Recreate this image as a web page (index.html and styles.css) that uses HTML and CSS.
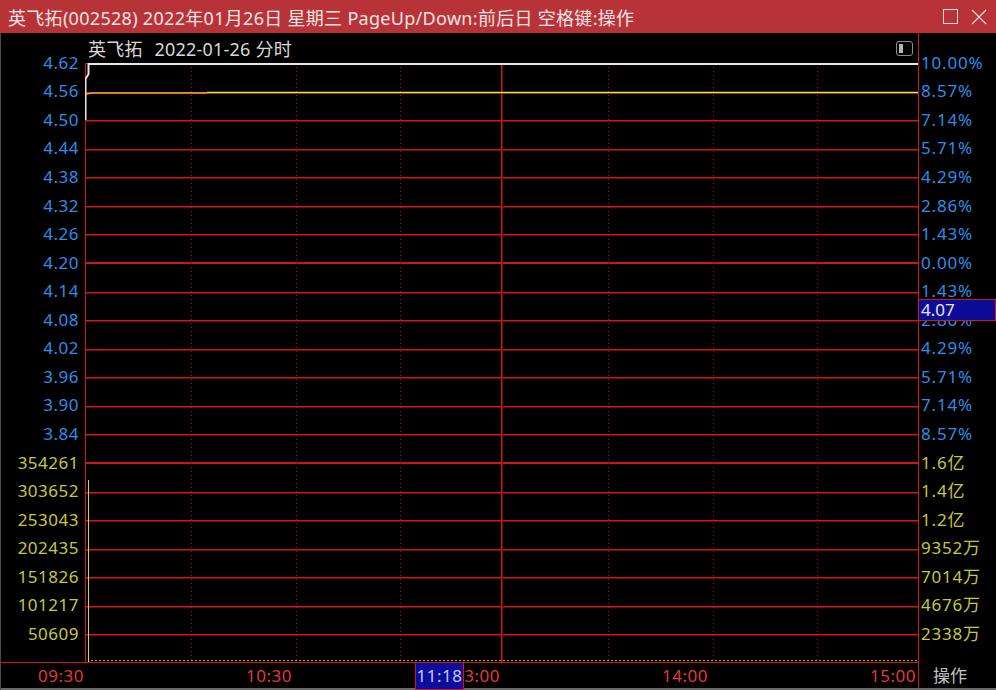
FILE: index.html
```html
<!DOCTYPE html>
<html lang="zh-CN">
<head>
    <meta charset="UTF-8">
    <title>英飞拓 分时</title>
    <link rel="stylesheet" href="styles.css">
</head>
<body>
    <div class="window">
        <div class="titlebar">
            <span class="title">英飞拓(002528) 2022年01月26日 星期三 PageUp/Down:前后日 空格键:操作</span>
            <div class="win-btns">
                <svg width="15" height="15" viewBox="0 0 15 15"><rect x="0.5" y="0.5" width="14" height="14" fill="none" stroke="#f2dada"/></svg>
                <svg width="16" height="16" viewBox="0 0 16 16"><path d="M1 1L15 15M15 1L1 15" stroke="#f2dada" stroke-width="1.2"/></svg>
            </div>
        </div>

        <div class="chart-head">
            <div class="head-main">
                <span class="stock-name">英飞拓</span>
                <span class="stock-date">2022-01-26 分时</span>
                <svg class="panel-icon" width="17" height="15" viewBox="0 0 17 15">
                    <rect x="0.5" y="0.5" width="16" height="14" rx="2.5" fill="none" stroke="#8c8c8c"/>
                    <rect x="3" y="3" width="4" height="9" fill="#b4b4b4"/>
                </svg>
            </div>
            <div class="head-side"></div>
        </div>

        <div class="chart-body">
            <div class="axis axis-left">
                <span class="blue">4.62</span>
                <span class="blue">4.56</span>
                <span class="blue">4.50</span>
                <span class="blue">4.44</span>
                <span class="blue">4.38</span>
                <span class="blue">4.32</span>
                <span class="blue">4.26</span>
                <span class="blue">4.20</span>
                <span class="blue">4.14</span>
                <span class="blue">4.08</span>
                <span class="blue">4.02</span>
                <span class="blue">3.96</span>
                <span class="blue">3.90</span>
                <span class="blue">3.84</span>
                <span class="yellow">354261</span>
                <span class="yellow">303652</span>
                <span class="yellow">253043</span>
                <span class="yellow">202435</span>
                <span class="yellow">151826</span>
                <span class="yellow">101217</span>
                <span class="yellow">50609</span>
            </div>

            <svg class="plot" width="833" height="599" viewBox="0 0 833 599">
                <!-- horizontal grid, soft edge under the main line -->
                <g stroke="#6e0c0c" stroke-width="1" shape-rendering="crispEdges" transform="translate(0 1)">
                    <path d="M0 29.5H833M0 57.5H833M0 86.5H833M0 114.5H833M0 143.5H833M0 171.5H833"/>
                    <path d="M0 229.5H833M0 257.5H833M0 286.5H833M0 314.5H833M0 343.5H833M0 371.5H833"/>
                    <path d="M0 429.5H833M0 457.5H833M0 486.5H833M0 514.5H833M0 543.5H833M0 571.5H833"/>
                </g>
                <g stroke="#d01616" stroke-width="1" shape-rendering="crispEdges">
                    <path d="M0 0.5H833M0 29.5H833M0 57.5H833M0 86.5H833M0 114.5H833M0 143.5H833M0 171.5H833"/>
                    <path d="M0 229.5H833M0 257.5H833M0 286.5H833M0 314.5H833M0 343.5H833M0 371.5H833"/>
                    <path d="M0 429.5H833M0 457.5H833M0 486.5H833M0 514.5H833M0 543.5H833M0 571.5H833"/>
                </g>
                <g stroke="#d01616" stroke-width="2" shape-rendering="crispEdges">
                    <path d="M0 200H833M0 400H833"/>
                </g>
                <!-- vertical grid -->
                <g stroke="#6e0c0c" stroke-width="1" shape-rendering="crispEdges">
                    <path d="M417.5 0V599"/>
                </g>
                <g stroke="#d01616" stroke-width="1" shape-rendering="crispEdges">
                    <path d="M0.5 0V599M416.5 0V599"/>
                </g>
                <g stroke="#b81414" stroke-width="1" stroke-dasharray="1 3" shape-rendering="crispEdges">
                    <path d="M106.5 0V599M211.5 0V599M315.5 0V599M523.5 0V599M628.5 0V599M732.5 0V599"/>
                </g>
                <!-- price -->
                <path d="M0.5 57V16L3.5 11V1H833" fill="none" stroke="#e8e8e8" stroke-width="2"/>
                <!-- average -->
                <path d="M1 31L7 30H122" fill="none" stroke="#eaac30" stroke-width="1.5"/>
                <path d="M122 29.5H833" fill="none" stroke="#e2e24a" stroke-width="1.5"/>
                <!-- volume -->
                <path d="M3.5 417V599" stroke="#d8d840" stroke-width="1" shape-rendering="crispEdges"/>
                <path d="M6 597.5H832" stroke="#b8a830" stroke-width="1" stroke-dasharray="2 2" shape-rendering="crispEdges"/>
            </svg>

            <div class="side">
                <div class="axis axis-right">
                    <span class="blue">10.00%</span>
                    <span class="blue">8.57%</span>
                    <span class="blue">7.14%</span>
                    <span class="blue">5.71%</span>
                    <span class="blue">4.29%</span>
                    <span class="blue">2.86%</span>
                    <span class="blue">1.43%</span>
                    <span class="blue">0.00%</span>
                    <span class="blue">1.43%</span>
                    <span class="blue">2.86%</span>
                    <span class="blue">4.29%</span>
                    <span class="blue">5.71%</span>
                    <span class="blue">7.14%</span>
                    <span class="blue">8.57%</span>
                    <span class="yellow">1.6亿</span>
                    <span class="yellow">1.4亿</span>
                    <span class="yellow">1.2亿</span>
                    <span class="yellow">9352万</span>
                    <span class="yellow">7014万</span>
                    <span class="yellow">4676万</span>
                    <span class="yellow">2338万</span>
                </div>
                <div class="price-tag">4.07</div>
            </div>
        </div>

        <div class="time-axis">
            <div class="time-main">
                <span>09:30</span>
                <span>10:30</span>
                <span>13:00</span>
                <span>14:00</span>
                <span>15:00</span>
                <div class="cursor-time">11:18</div>
            </div>
            <div class="time-side">操作</div>
        </div>
    </div>
</body>
</html>
```

FILE: styles.css
```css
* {
    margin: 0;
    padding: 0;
    box-sizing: border-box;
}

body {
    background-color: #000;
    font-family: "Noto Sans", "Noto Sans CJK SC", sans-serif;
}

.window {
    width: 996px;
    height: 690px;
    background-color: #000;
    overflow: hidden;
    box-shadow: inset 1px 0 0 #4a4a4a, inset 0 -2px 0 #6a6a6a;
}

.titlebar {
    height: 33px;
    background-color: #b83338;
    color: #f5e4e4;
    display: flex;
    align-items: center;
    justify-content: space-between;
    padding: 0 9px 0 8px;
    font-size: 18px;
    letter-spacing: 0.3px;
}

.win-btns {
    display: flex;
    align-items: center;
    gap: 13px;
}

.chart-head {
    height: 30px;
    display: flex;
}

.head-main {
    width: 918px;
    display: flex;
    align-items: center;
    padding: 0 5px 0 88px;
    color: #d8d8d8;
    font-size: 18px;
    letter-spacing: 0.2px;
}

.stock-name {
    margin-right: 12px;
}

.panel-icon {
    margin-left: auto;
}

.head-side {
    flex: 1;
    border-left: 1px solid #d01616;
}

.chart-body {
    height: 599px;
    display: flex;
}

.axis {
    display: flex;
    flex-direction: column;
    margin-top: -14.3px;
    font-size: 17px;
    letter-spacing: 0.5px;
}

.axis span {
    height: 28.571px;
    line-height: 28.571px;
    flex-shrink: 0;
    white-space: nowrap;
}

.axis-left {
    width: 85px;
    flex-shrink: 0;
    text-align: right;
    padding-right: 6px;
}

.plot {
    display: block;
    flex-shrink: 0;
}

.side {
    flex: 1;
    position: relative;
    border-left: 1px solid #d01616;
}

.axis-right {
    padding-left: 2px;
    letter-spacing: 0.8px;
}

.blue {
    color: #2c8ee6;
}

.yellow {
    color: #c8c83a;
}

.price-tag {
    position: absolute;
    left: -1px;
    right: 0;
    top: 236px;
    height: 22px;
    background-color: #0c0c98;
    border: 1px solid #d01616;
    color: #e8e8f0;
    font-size: 17px;
    line-height: 19px;
    padding-left: 2px;
}

.time-axis {
    height: 26px;
    display: flex;
}

.time-main {
    width: 918px;
    position: relative;
    border-top: 1px solid #d01616;
    display: grid;
    grid-template-columns: 85px repeat(4, 208px);
    color: #e03a3a;
    font-size: 17px;
    letter-spacing: 0.5px;
    line-height: 25px;
}

.time-main span {
    text-align: right;
    padding-right: 1px;
}

.cursor-time {
    position: absolute;
    left: 415px;
    top: -1px;
    width: 49px;
    height: 28px;
    background-color: #0c0c9e;
    border: 1px solid #d01616;
    color: #c8c8ff;
    text-align: center;
    line-height: 25px;
}

.time-side {
    flex: 1;
    border-left: 1px solid #d01616;
    color: #c4c4c4;
    font-size: 17px;
    line-height: 27px;
    padding-left: 14px;
}
```
